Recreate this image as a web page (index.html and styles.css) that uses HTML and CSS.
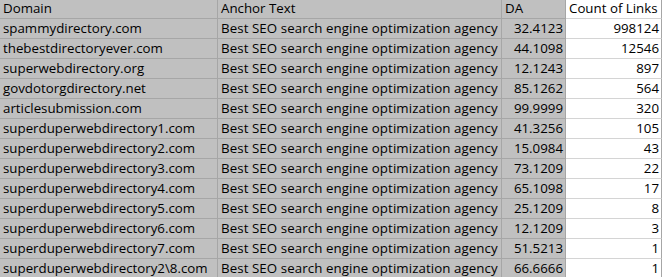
FILE: index.html
```html
<!DOCTYPE html>
<html>
<head>
<meta charset="utf-8">
<link rel="stylesheet" href="styles.css">
</head>
<body>
<div class="sheet">
  <div class="cell g">Domain</div><div class="cell g">Anchor Text</div><div class="cell g">DA</div><div class="cell w">Count of Links</div>
  <div class="cell g">spammydirectory.com</div><div class="cell g at">Best SEO search engine optimization agency</div><div class="cell g num">32.4123</div><div class="cell w num">998124</div>
  <div class="cell g">thebestdirectoryever.com</div><div class="cell g at">Best SEO search engine optimization agency</div><div class="cell g num">44.1098</div><div class="cell w num">12546</div>
  <div class="cell g">superwebdirectory.org</div><div class="cell g at">Best SEO search engine optimization agency</div><div class="cell g num">12.1243</div><div class="cell w num">897</div>
  <div class="cell g">govdotorgdirectory.net</div><div class="cell g at">Best SEO search engine optimization agency</div><div class="cell g num">85.1262</div><div class="cell w num">564</div>
  <div class="cell g">articlesubmission.com</div><div class="cell g at">Best SEO search engine optimization agency</div><div class="cell g num">99.9999</div><div class="cell w num">320</div>
  <div class="cell g">superduperwebdirectory1.com</div><div class="cell g at">Best SEO search engine optimization agency</div><div class="cell g num">41.3256</div><div class="cell w num">105</div>
  <div class="cell g">superduperwebdirectory2.com</div><div class="cell g at">Best SEO search engine optimization agency</div><div class="cell g num">15.0984</div><div class="cell w num">43</div>
  <div class="cell g">superduperwebdirectory3.com</div><div class="cell g at">Best SEO search engine optimization agency</div><div class="cell g num">73.1209</div><div class="cell w num">22</div>
  <div class="cell g">superduperwebdirectory4.com</div><div class="cell g at">Best SEO search engine optimization agency</div><div class="cell g num">65.1098</div><div class="cell w num">17</div>
  <div class="cell g">superduperwebdirectory5.com</div><div class="cell g at">Best SEO search engine optimization agency</div><div class="cell g num">25.1209</div><div class="cell w num">8</div>
  <div class="cell g">superduperwebdirectory6.com</div><div class="cell g at">Best SEO search engine optimization agency</div><div class="cell g num">12.1209</div><div class="cell w num">3</div>
  <div class="cell g">superduperwebdirectory7.com</div><div class="cell g at">Best SEO search engine optimization agency</div><div class="cell g num">51.5213</div><div class="cell w num">1</div>
  <div class="cell g">superduperwebdirectory2\8.com</div><div class="cell g at">Best SEO search engine optimization agency</div><div class="cell g num">66.6666</div><div class="cell w num">1</div>
</div>
</body>
</html>
```
FILE: styles.css
```css
html, body { margin: 0; padding: 0; background: #ffffff; }
body { overflow: hidden; }
.sheet {
  display: grid;
  grid-template-columns: 218px 284px 64px 96px;
  grid-auto-rows: 20px;
  margin-top: -1px;
  font-family: "Open Sans", sans-serif;
  font-size: 13.3px;
  color: #000;
}
.cell {
  box-sizing: border-box;
  border-right: 1px solid #a6a6a6;
  border-bottom: 1px solid #a6a6a6;
  padding: 0 3px;
  white-space: nowrap;
  overflow: hidden;
  line-height: 19px;
  display: flex;
  align-items: flex-end;
}
.g { background: #c0c0c0; }
.w { background: #ffffff; border-bottom-color: #d4d4d4; border-right-color: #a6a6a6; }
.at { letter-spacing: 0.08px; }
.num { justify-content: flex-end; padding-right: 2px; }
```
